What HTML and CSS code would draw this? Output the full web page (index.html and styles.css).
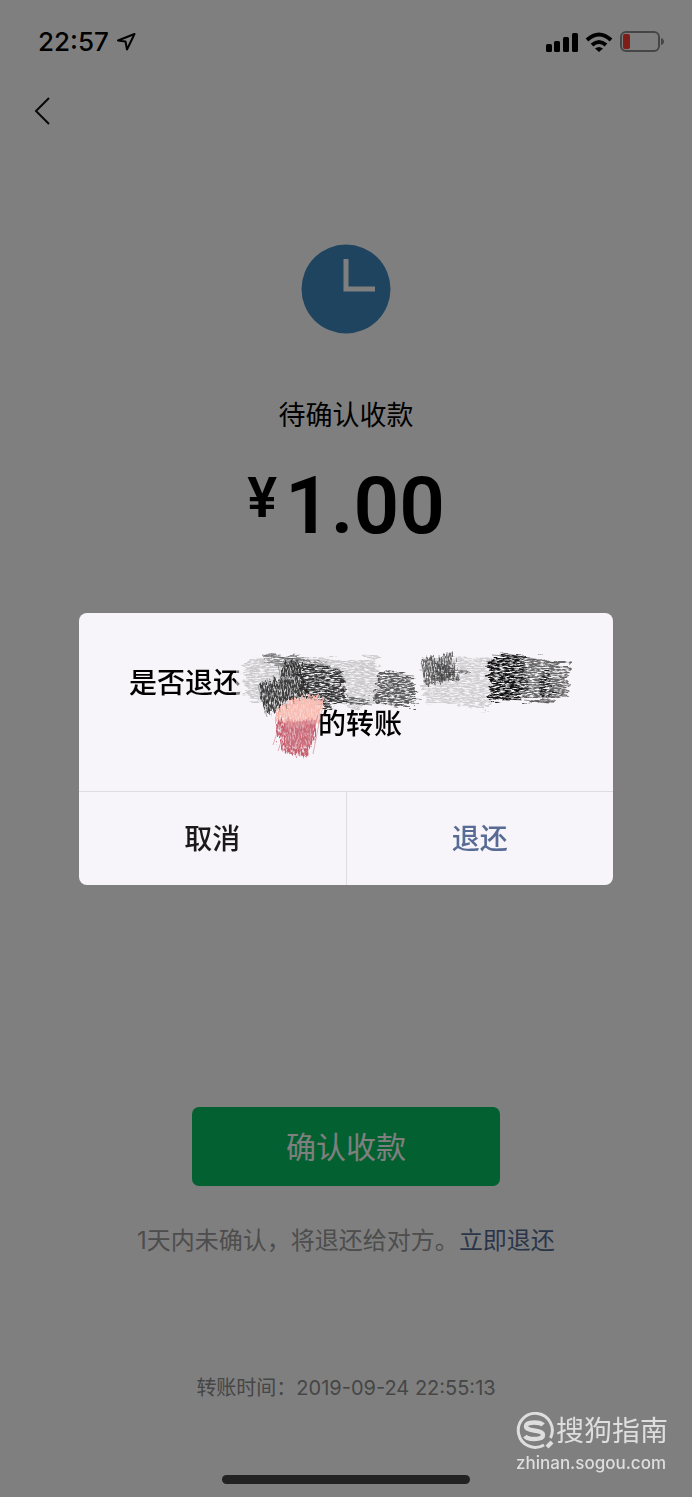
FILE: index.html
```html
<!DOCTYPE html>
<html lang="zh-CN">
<head>
    <meta charset="UTF-8">
    <meta name="viewport" content="width=device-width, initial-scale=1.0">
    <title>待确认收款</title>
    <link rel="stylesheet" href="styles.css">
</head>
<body>
    <div class="page">
        <!-- Status Bar -->
        <div class="status-bar">
            <div class="status-left">
                <span class="clock-time">22:57</span>
                <svg width="20" height="20" viewBox="0 0 20 20" fill="none" stroke="#000" stroke-width="2" stroke-linejoin="round">
                    <path d="M18.500 2L2 8.500L9.500 9.500L11 17.500Z"/>
                </svg>
            </div>
            <div class="status-right">
                <svg width="32" height="20" viewBox="0 0 32 20">
                    <rect x="0" y="12" width="6" height="8" rx="1.500"/>
                    <rect x="8" y="9" width="6" height="11" rx="1.500"/>
                    <rect x="17" y="5" width="6" height="15" rx="1.500"/>
                    <rect x="26" y="1" width="6" height="19" rx="1.500"/>
                </svg>
                <svg width="28" height="20" viewBox="0 0 28 20" fill="none" stroke="#000" stroke-width="4">
                    <path d="M2 8Q14 -3 26 8"/>
                    <path d="M7 13Q14 7 21 13"/>
                    <path d="M14 20L10 16.500Q14 13.500 18 16.500Z" fill="#000" stroke="none"/>
                </svg>
                <svg width="44" height="22" viewBox="0 0 44 22">
                    <rect x="1" y="1" width="38" height="19" rx="5" fill="none" stroke="#8c8c8c" stroke-width="2"/>
                    <rect x="3" y="3" width="7" height="15" rx="2" fill="#ff3b30"/>
                    <path d="M41 7Q44 8 44 10.500Q44 13 41 14Z" fill="#8c8c8c"/>
                </svg>
            </div>
        </div>

        <!-- Navigation -->
        <div class="nav">
            <a href="#" class="back" aria-label="返回">
                <svg width="18" height="30" viewBox="0 0 18 30" fill="none" stroke="#111" stroke-width="2">
                    <path d="M16 2L3 15L16 28"/>
                </svg>
            </a>
        </div>

        <!-- Transfer Info -->
        <div class="content">
            <svg class="wait-icon" width="90" height="90" viewBox="0 0 90 90">
                <circle cx="45" cy="45" r="44.500" fill="#3d88bf"/>
                <path d="M45 15V45H74" fill="none" stroke="#fff" stroke-width="5"/>
            </svg>
            <div class="state">待确认收款</div>
            <div class="amount"><span class="currency">¥</span><span>1.00</span></div>
        </div>

        <div class="actions">
            <button type="button" class="btn-confirm">确认收款</button>
            <p class="hint">1天内未确认，将退还给对方。<a href="#">立即退还</a></p>
            <p class="time">转账时间：2019-09-24 22:55:13</p>
            <div class="home-indicator"></div>
        </div>
    </div>

    <!-- Refund Dialog -->
    <div class="mask">
        <div class="dialog" role="dialog">
            <div class="dialog-body">
                <p class="message">是否退还<span class="hidden-name"></span><span class="hidden-emoji"></span>的转账</p>
                <svg class="scribble" width="340" height="116" viewBox="236 644 340 116">
                    <defs>
                        <filter id="grain" x="-10%" y="-10%" width="120%" height="120%" color-interpolation-filters="sRGB">
                            <feTurbulence type="fractalNoise" baseFrequency="0.06 0.3" numOctaves="2" seed="4" result="n"/>
                            <feTurbulence type="fractalNoise" baseFrequency="0.2 0.8" numOctaves="3" seed="7" result="fine"/>
                            <feColorMatrix in="fine" type="matrix" values="0 0 0 0 0  0 0 0 0 0  0 0 0 0 0  0 0 0 3.200 -0.900" result="m"/>
                            <feDisplacementMap in="SourceGraphic" in2="n" scale="18" xChannelSelector="R" yChannelSelector="A" result="d"/>
                            <feComposite in="d" in2="m" operator="in"/>
                            <feGaussianBlur stdDeviation="0.400"/>
                        </filter>
                        <filter id="grainUp" x="-10%" y="-10%" width="120%" height="120%" color-interpolation-filters="sRGB">
                            <feTurbulence type="fractalNoise" baseFrequency="0.3 0.06" numOctaves="2" seed="9" result="n"/>
                            <feTurbulence type="fractalNoise" baseFrequency="0.7 0.25" numOctaves="3" seed="3" result="fine"/>
                            <feColorMatrix in="fine" type="matrix" values="0 0 0 0 0  0 0 0 0 0  0 0 0 0 0  0 0 0 3.200 -0.850" result="m"/>
                            <feDisplacementMap in="SourceGraphic" in2="n" scale="14" xChannelSelector="A" yChannelSelector="R" result="d"/>
                            <feComposite in="d" in2="m" operator="in"/>
                            <feGaussianBlur stdDeviation="0.400"/>
                        </filter>
                    </defs>
                    <path d="M228 664L246 662L246 700L232 698Z" fill="#f7f5f9" opacity="0.5"/>
                    <g filter="url(#grain)">
                        <path d="M243 660L280 654L350 658L378 655L380 700L352 708L246 697Z" fill="#888" opacity="0.4"/>
                        <path d="M262 654L300 655L330 664L300 668L262 660Z" fill="#444" opacity="0.5"/>
                        <path d="M300 663L340 668L344 690L350 702L326 706L300 695Z" fill="#222" opacity="0.9"/>
                        <path d="M326 693L372 698L372 704L326 704Z" fill="#333" opacity="0.6"/>
                        <path d="M377 672L414 674L416 706L376 705Z" fill="#333" opacity="0.8"/>
                        <path d="M420 658L490 655L490 708L424 700Z" fill="#888" opacity="0.35"/>
                        <path d="M436 662L468 669L466 674L436 682Z" fill="#333" opacity="0.6"/>
                        <path d="M490 655L526 654L526 699L488 698Z" fill="#111"/>
                        <path d="M520 656L570 664L568 694L548 702L520 698Z" fill="#444" opacity="0.8"/>
                        <path d="M542 670L550 670L552 698L540 696Z" fill="#000" opacity="0.7"/>
                    </g>
                    <g fill="none" stroke="#333" stroke-width="1" opacity="0.5">
                        <path d="M502 652L556 662M492 654L530 657M490 697L522 699M524 699L548 702M379 672L414 675M304 664L340 668M330 699L372 704M262 654L310 660"/>
                    </g>
                    <g filter="url(#grainUp)">
                        <path d="M258 683L276 678L286 660L302 663L308 690L290 705L266 714Z" fill="#222" opacity="0.85"/>
                        <path d="M420 660L452 652L458 678L426 684Z" fill="#333" opacity="0.7"/>
                        <path d="M276 704L304 694L324 696L320 722L292 730L274 720Z" fill="#f9b5aa"/>
                        <path d="M280 719L316 718L314 740L306 755L284 752L276 736Z" fill="#c65d6c"/>
                    </g>
                    <path d="M280 710Q302 694 323 699L318 722L288 727Z" fill="#f8c2b8" opacity="0.6"/>
                    <path d="M284 722L316 719L310 746L286 746Z" fill="#cf7886" opacity="0.5"/>
                    <g fill="none" stroke="#c96675" stroke-width="1" opacity="0.5">
                        <path d="M282 716L273 744M288 720L278 750M294 722L285 752M300 720L292 754M307 718L298 755M312 717L305 754M318 714L310 744M321 712L313 753"/>
                    </g>
                    <g fill="none" stroke="#333" stroke-width="1" opacity="0.4">
                        <path d="M258 684L267 716M262 680L270 714M267 678L275 708M273 674L280 711M278 664L287 708M284 660L294 703M291 658L300 700M421 662L427 684M426 658L430 676M431 654L435 682M439 654L442 681M447 651L450 679"/>
                    </g>
                </svg>
            </div>
            <div class="dialog-buttons">
                <button type="button" class="btn-cancel">取消</button>
                <button type="button" class="btn-refund">退还</button>
            </div>
        </div>
    </div>

    <!-- Watermark -->
    <div class="watermark">
        <div class="watermark-brand">
            <svg width="38" height="38" viewBox="0 0 38 38" fill="none" stroke="#dedede">
                <path d="M28 33A17 17 0 1 1 34.500 26" stroke-width="3"/>
                <path d="M27 13Q25 10.500 18 10.500Q10 10.500 10 14.500Q10 17.500 18 18.500Q27 19.500 27 23Q27 27 18 27Q11 27 9 24" stroke-width="4.500"/>
                <path d="M31 35L36 30" stroke-width="4"/>
            </svg>
            <span>搜狗指南</span>
        </div>
        <div class="watermark-url">zhinan.sogou.com</div>
    </div>
</body>
</html>
```

FILE: styles.css
```css
body {
    font-family: Inter, "Noto Sans CJK SC", sans-serif;
    margin: 0;
    padding: 0;
    background-color: #fff;
    color: #000;
}

svg {
    display: block;
}

p {
    margin: 0;
}

a {
    text-decoration: none;
}

button {
    border: none;
    padding: 0 0 3px;
    font-family: inherit;
    cursor: pointer;
}

.page {
    display: flex;
    flex-direction: column;
    min-height: 100vh;
}

.status-bar {
    display: flex;
    justify-content: space-between;
    align-items: center;
    height: 83px;
    padding: 0 28px 0 38px;
}

.status-left, .status-right {
    display: flex;
    align-items: center;
    gap: 7px;
}

.clock-time {
    font-size: 26px;
    font-weight: 500;
}

.nav {
    display: flex;
    align-items: center;
    height: 55px;
    padding: 0 33px;
}

.content {
    display: flex;
    flex-direction: column;
    align-items: center;
    margin-top: 106px;
}

.state {
    margin-top: 64px;
    font-size: 27px;
    line-height: 36px;
}

.amount {
    display: flex;
    align-items: flex-start;
    gap: 8px;
    margin-top: 32px;
    font-family: Roboto, sans-serif;
    font-size: 80px;
    font-weight: 600;
    line-height: 80px;
}

.currency {
    font-size: 56px;
    line-height: 64px;
}

.actions {
    display: flex;
    flex-direction: column;
    align-items: center;
    margin-top: auto;
    padding-bottom: 13px;
}

.btn-confirm {
    width: 308px;
    height: 79px;
    border-radius: 7px;
    background-color: #07c160;
    color: #fff;
    font-size: 30px;
}

.hint {
    margin-top: 38px;
    font-size: 24px;
    line-height: 34px;
    color: #9a9a9a;
}

.hint a {
    color: #576b95;
}

.time {
    margin-top: 116px;
    font-size: 20px;
    line-height: 28px;
    color: #8c8c8c;
}

.home-indicator {
    width: 248px;
    height: 9px;
    margin-top: 73px;
    border-radius: 5px;
    background-color: #444;
}

.mask {
    position: fixed;
    inset: 0;
    display: flex;
    justify-content: center;
    align-items: center;
    background-color: rgba(0, 0, 0, 0.5);
}

.dialog {
    width: 534px;
    max-width: 90%;
    border-radius: 8px;
    background-color: #f7f5f9;
    overflow: hidden;
}

.dialog-body {
    position: relative;
    padding: 50px 48px 46px;
}

.message {
    font-size: 28px;
    font-weight: 500;
    line-height: 41px;
    text-align: center;
}

.hidden-name {
    display: inline-block;
    width: 322px;
}

.hidden-emoji {
    display: inline-block;
    width: 28px;
}

/* crayon strokes over the name */
.scribble {
    position: absolute;
    top: 32px;
    left: 157px;
}

.dialog-buttons {
    display: flex;
    border-top: 1px solid #dddce0;
}

.dialog-buttons button {
    flex: 1;
    height: 93px;
    background-color: transparent;
    font-size: 28px;
    font-weight: 500;
}

.btn-cancel {
    color: #1a1a1a;
}

.dialog-buttons .btn-refund {
    border-left: 1px solid #dddce0;
    color: #576b95;
}

.watermark {
    position: fixed;
    right: 24px;
    bottom: 22px;
    color: #dedede;
}

.watermark-brand {
    display: flex;
    align-items: center;
    gap: 2px;
    font-size: 28px;
    line-height: 40px;
}

.watermark-url {
    font-size: 17px;
    font-weight: 500;
    line-height: 24px;
}
```
